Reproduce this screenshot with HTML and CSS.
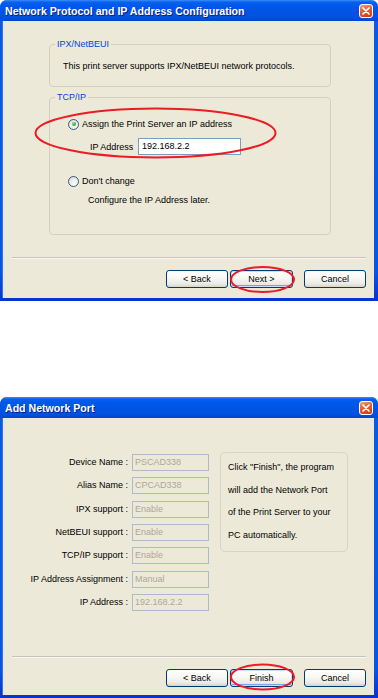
FILE: index.html
```html
<!DOCTYPE html>
<html>
<head>
<meta charset="utf-8">
<link rel="stylesheet" href="styles.css">
</head>
<body>
<div class="page">
  <section class="dialog">
    <header class="titlebar">
      <span class="title">Network Protocol and IP Address Configuration</span>
      <span class="close"><svg width="8" height="8" viewBox="0 0 8 8"><path d="M1 1L7 7M7 1L1 7" stroke="#fff" stroke-width="1.7" stroke-linecap="round"/></svg></span>
    </header>
    <div class="body">
      <div class="main main1">
        <fieldset class="group g1">
          <legend>IPX/NetBEUI</legend>
          <p class="g1-text">This print server supports IPX/NetBEUI network protocols.</p>
        </fieldset>
        <fieldset class="group g2">
          <legend>TCP/IP</legend>
          <div class="radio-row r1"><span class="radio checked"></span><span>Assign the Print Server an IP address</span></div>
          <div class="ip-row"><span class="ip-label">IP Address</span><span class="input">192.168.2.2</span></div>
          <div class="radio-row r2"><span class="radio"></span><span>Don't change</span></div>
          <div class="note">Configure the IP Address later.</div>
        </fieldset>
      </div>
      <div class="sep"></div>
      <div class="buttons">
        <span class="btn">&lt; Back</span>
        <span class="btn default">Next &gt;</span>
        <span class="btn cancel">Cancel</span>
      </div>
    </div>
    <svg class="marks" width="378" height="301" viewBox="0 0 378 301">
      <ellipse cx="155.5" cy="133" rx="120" ry="24.5" fill="none" stroke="#ec1c24" stroke-width="2"/>
      <ellipse cx="262.5" cy="279.5" rx="31.5" ry="12.5" fill="none" stroke="#ec1c24" stroke-width="2"/>
    </svg>
  </section>

  <section class="dialog d2">
    <header class="titlebar">
      <span class="title">Add Network Port</span>
      <span class="close"><svg width="8" height="8" viewBox="0 0 8 8"><path d="M1 1L7 7M7 1L1 7" stroke="#fff" stroke-width="1.7" stroke-linecap="round"/></svg></span>
    </header>
    <div class="body">
      <div class="main main2">
        <div class="form">
          <span class="lbl">Device Name :</span><span class="field">PSCAD338</span>
          <span class="lbl">Alias Name :</span><span class="field">CPCAD338</span>
          <span class="lbl">IPX support :</span><span class="field">Enable</span>
          <span class="lbl">NetBEUI support :</span><span class="field">Enable</span>
          <span class="lbl">TCP/IP support :</span><span class="field">Enable</span>
          <span class="lbl">IP Address Assignment :</span><span class="field">Manual</span>
          <span class="lbl">IP Address :</span><span class="field">192.168.2.2</span>
        </div>
        <div class="info">
          <div>Click "Finish", the program</div>
          <div>will add the Network Port</div>
          <div>of the Print Server to your</div>
          <div>PC automatically.</div>
        </div>
      </div>
      <div class="sep"></div>
      <div class="buttons">
        <span class="btn">&lt; Back</span>
        <span class="btn default">Finish</span>
        <span class="btn cancel">Cancel</span>
      </div>
    </div>
    <svg class="marks" width="378" height="301" viewBox="0 0 378 301">
      <ellipse cx="262.5" cy="280" rx="31.5" ry="12.5" fill="none" stroke="#ec1c24" stroke-width="2"/>
    </svg>
  </section>
</div>
</body>
</html>
```

FILE: styles.css
```css
html, body {
  margin: 0;
  padding: 0;
  background: #ffffff;
}
body {
  font-family: "Liberation Sans", Arial, sans-serif;
  font-size: 9px;
  color: #000;
}
.page {
  width: 378px;
  display: flex;
  flex-direction: column;
  gap: 96px;
}
.dialog {
  position: relative;
  width: 378px;
  height: 301px;
  box-sizing: border-box;
  border-radius: 7px 7px 0 0;
  background: linear-gradient(180deg, #0a5ae6 0%, #0a56e2 90%, #0733cf 100%);
  display: flex;
  flex-direction: column;
  overflow: hidden;
}
.titlebar {
  height: 21px;
  flex: none;
  display: flex;
  align-items: center;
  padding: 0 5px 0 5px;
  background: linear-gradient(180deg, #3d8ff7 0px, #0a61ec 2px, #0058ee 5px, #0054e3 12px, #0252e0 17px, #0045d0 21px);
}
.title {
  color: #fff;
  font-weight: bold;
  font-size: 10.6px;
  text-shadow: 1px 1px 0 #0a1e8a;
  padding-top: 1px;
}
.close {
  margin-left: auto;
  width: 12px;
  height: 12px;
  border: 1px solid #fff;
  border-radius: 3px;
  background: linear-gradient(160deg, #f2a488 0%, #e5683f 35%, #d94c22 70%, #c73a14 100%);
  display: flex;
  align-items: center;
  justify-content: center;
}
.body {
  flex: 1;
  margin: 0 4px 3px 3px;
  background: #ece9d8;
  display: flex;
  flex-direction: column;
  box-shadow: -1px 0 0 #2b73f0;
}
.main1 {
  display: flex;
  flex-direction: column;
  padding-top: 18px;
}
.group {
  margin: 0 43px 0 46px;
  padding: 0;
  border: 1px solid #d4d0c0;
  border-radius: 4px;
  min-width: 0;
}
.group legend {
  margin-left: 5px;
  padding: 0 2px;
  line-height: 10px;
  color: #0046d5;
}
.g1-text {
  margin: 11px 0 14px 13px;
  line-height: 12px;
}
.g2 {
  margin-top: 5px;
  padding-left: 18px;
  padding-bottom: 28px;
}
.g2 legend {
  margin-left: -13px;
}
.radio-row {
  display: flex;
  align-items: center;
  gap: 3px;
  line-height: 12px;
}
.r1 {
  margin-top: 16px;
}
.r2 {
  margin-top: 20px;
}
.radio {
  width: 9px;
  height: 9px;
  border: 1px solid #2f5d86;
  border-radius: 50%;
  background: radial-gradient(circle at 65% 70%, #ffffff 0%, #f1f0ea 40%, #d6d4cb 100%);
  display: flex;
  align-items: center;
  justify-content: center;
}
.radio.checked::after {
  content: "";
  width: 4px;
  height: 4px;
  border-radius: 50%;
  background: radial-gradient(circle at 35% 35%, #8be38a 0%, #2eb22c 60%, #1b8f1a 100%);
}
.ip-row {
  display: flex;
  align-items: center;
  margin-top: 8px;
  padding-left: 22px;
}
.ip-label {
  width: 48px;
}
.input {
  width: 98px;
  height: 15px;
  line-height: 15px;
  border: 1px solid #7f9db9;
  background: #fff;
  padding-left: 3px;
}
.note {
  margin-top: 7px;
  padding-left: 20px;
  line-height: 12px;
}
.sep {
  margin: 0 8px 0 9px;
  height: 0;
  border-top: 1px solid #c9c5b6;
  border-bottom: 1px solid #f7f6f0;
}
.main1 + .sep {
  margin-top: 22px;
}
.buttons {
  display: flex;
  justify-content: flex-end;
  gap: 2px;
  margin: 11px 8px 0 0;
}
.btn {
  width: 60px;
  height: 16px;
  line-height: 16px;
  text-align: center;
  border: 1px solid #003c74;
  border-radius: 3px;
  background: linear-gradient(180deg, #ffffff 0%, #f7f7f3 45%, #eceae3 80%, #d8d3c7 100%);
}
.btn.default {
  width: 61px;
  box-shadow: inset 0 0 0 1px #c6dcf8, inset 0 -1px 0 1px #7ba2e7;
}
.btn.cancel {
  margin-left: 9px;
}
.main2 {
  display: flex;
  align-items: flex-start;
  padding-top: 34px;
  height: 217px;
  box-sizing: border-box;
}
.form {
  display: grid;
  grid-template-columns: 125px 77px;
  grid-auto-rows: 17px;
  row-gap: 6.33px;
  column-gap: 4px;
  margin-top: 2px;
}
.lbl {
  text-align: right;
  line-height: 17px;
}
.field {
  box-sizing: border-box;
  border: 1px solid #a9bcc8;
  line-height: 15px;
  padding-left: 2px;
  color: #aca899;
}
.info {
  margin-left: 11px;
  border: 1px solid #d8d5c6;
  border-radius: 5px;
  padding: 3px 0 5px 7px;
  box-sizing: border-box;
  width: 128px;
  height: 100px;
  line-height: 22.5px;
}
.main2 + .sep {
  margin-top: 21px;
}
.marks {
  position: absolute;
  left: 0;
  top: 0;
  pointer-events: none;
}
```
